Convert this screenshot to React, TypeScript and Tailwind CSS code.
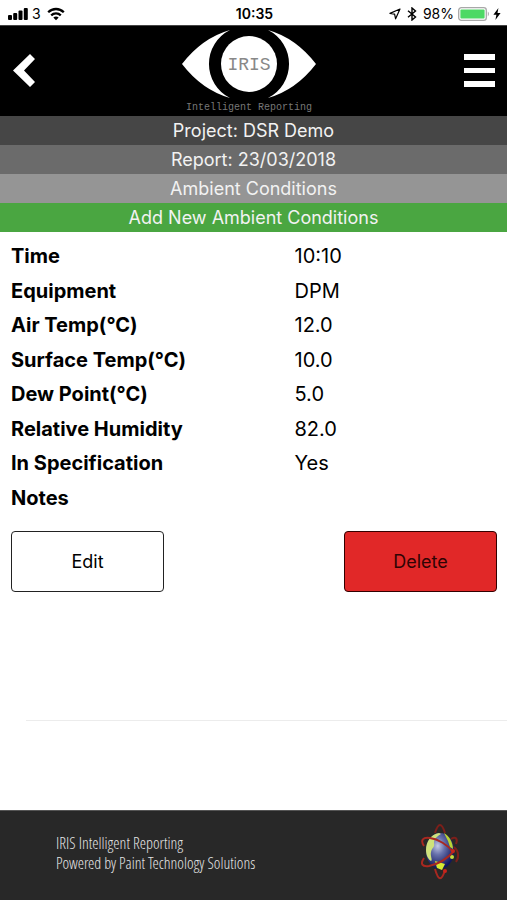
import type { ReactNode } from "react";

type Reading = {
  label: string;
  value: string;
};

const readings: Reading[] = [
  { label: "Time", value: "10:10" },
  { label: "Equipment", value: "DPM" },
  { label: "Air Temp(°C)", value: "12.0" },
  { label: "Surface Temp(°C)", value: "10.0" },
  { label: "Dew Point(°C)", value: "5.0" },
  { label: "Relative Humidity", value: "82.0" },
  { label: "In Specification", value: "Yes" },
  { label: "Notes", value: "" },
];

const StatusBar = () => (
  <div className="grid h-[25px] grid-cols-3 items-center pt-[2px] pl-2 pr-[6px] text-sm leading-5 text-black">
    <div className="flex items-center">
      <svg width="20" height="12" viewBox="0 0 20 12" aria-hidden="true">
        <rect x="0" y="7" width="4" height="5" rx="1" />
        <rect x="5.2" y="5" width="4" height="7" rx="1" />
        <rect x="10.5" y="2.5" width="4" height="9.5" rx="1" />
        <rect x="15.8" y="0" width="4" height="12" rx="1" />
      </svg>
      <span className="ml-1">3</span>
      <svg className="ml-[6px]" width="18" height="14" viewBox="0 0 18 14" fill="none" stroke="currentColor" strokeWidth="2.3" aria-hidden="true">
        <path d="M1.2 5.2C5.6 .9 12.4 .9 16.8 5.2" />
        <path d="M4.2 8.3C6.9 5.7 11.1 5.7 13.8 8.3" />
        <path d="M6.3 10.5C7.9 9.1 10.1 9.1 11.7 10.5L9 13.3Z" fill="currentColor" stroke="none" />
      </svg>
    </div>
    <div className="text-center font-semibold">10:35</div>
    <div className="flex items-center justify-end">
      <svg width="12" height="12" viewBox="0 0 12 12" fill="none" stroke="currentColor" strokeWidth="1.2" strokeLinejoin="round" aria-hidden="true">
        <path d="M11 1L1 5.4L5.6 6.2L6.6 10.8Z" />
      </svg>
      <svg className="ml-[6px]" width="10" height="14" viewBox="0 0 10 14" fill="none" stroke="currentColor" strokeWidth="1.4" aria-hidden="true">
        <path d="M1 3.8L8.5 10L5 13V1L8.5 4L1 10.2" />
      </svg>
      <span className="ml-[6px]">98%</span>
      <svg className="ml-1" width="32" height="14" viewBox="0 0 32 14" aria-hidden="true">
        <rect x=".7" y=".7" width="27.6" height="12.6" rx="2.6" fill="#fff" stroke="#a8a8a8" strokeWidth="1.3" />
        <rect x="2.4" y="2.4" width="24.2" height="9.2" rx="1" fill="#4cd964" />
        <path d="M29.8 4.6C31.3 5.4 31.3 8.6 29.8 9.4Z" fill="#a8a8a8" />
      </svg>
      <svg className="ml-[3px]" width="8" height="12" viewBox="0 0 8 12" aria-hidden="true">
        <path d="M5.4 0L.4 6.8H3.4L2.4 12L7.6 5H4.5Z" />
      </svg>
    </div>
  </div>
);

const IrisLogo = () => (
  <svg width="136" height="84" viewBox="181 28 136 84" role="img" aria-label="IRIS Intelligent Reporting">
    <g fill="#fff">
      <path d="M182 64Q202 38 230 30A38 38 0 0 0 230 98Q202 90 182 64Z" />
      <path d="M316 64Q296 38 268 30A38 38 0 0 1 268 98Q296 90 316 64Z" />
      <circle cx="249" cy="64" r="28" />
    </g>
    <g className="font-['Liberation_Mono',monospace]" textAnchor="middle">
      <text x="249" y="70" fontSize="18" fill="#888">IRIS</text>
      <text x="249" y="110" fontSize="10" fill="#777">Intelligent Reporting</text>
    </g>
  </svg>
);

const Header = () => (
  <header className="flex h-[91px] items-center justify-between border-t border-[#444] bg-black pb-[2px] pl-[13px] pr-3">
    <button type="button" aria-label="Back" className="w-[21px]">
      <svg width="22" height="33" viewBox="0 0 22 33" fill="#fff">
        <path d="M17 0L0 16.5L17 33L22 28L11 16.5L22 5Z" />
      </svg>
    </button>
    <IrisLogo />
    <button type="button" aria-label="Menu" className="flex w-[31px] flex-col gap-2">
      <span className="h-[6px] w-full bg-white" />
      <span className="h-[5px] w-full bg-white" />
      <span className="h-[6px] w-full bg-white" />
    </button>
  </header>
);

const Band = ({ className, children }: { className: string; children: ReactNode }) => (
  <div className={`h-[29px] text-center text-lg leading-[29px] text-[#f2f2f2] ${className}`}>{children}</div>
);

const GlobeLogo = () => (
  <svg width="40" height="60" viewBox="0 0 40 60" role="img" aria-label="Paint Technology Solutions">
    <defs>
      <radialGradient id="globe" cx="42%" cy="36%" r="62%">
        <stop offset="0" stopColor="#c3c8e6" />
        <stop offset=".4" stopColor="#6670aa" />
        <stop offset="1" stopColor="#10165c" />
      </radialGradient>
    </defs>
    <g fill="none" stroke="#7c1f1a" strokeWidth="2">
      <path d="M36 39C40 33 38 26 33 24M31 16C36 13 38 16 36 21" />
      <path d="M15 10Q20 -6 25 10" />
    </g>
    <ellipse cx="20" cy="28" rx="14" ry="18" fill="url(#globe)" />
    <path d="M19 10C11 11 6 19 6 27C6 32 8 36 11 38C13 37 10 33 11 29C12 24 15 25 14 20C14 15 18 13 21 11Z" fill="#cfe27a" />
    <path d="M24 10C29 13 33 19 33 26L30 24L28 18Z" fill="#b9d334" />
    <path d="M15 38L25 41L22 47L17 45Z" fill="#d5ea32" />
    <circle cx="32" cy="34" r="2" fill="#c6dc3c" />
    <g fill="none" stroke="#a82820" strokeWidth="2">
      <path d="M4 23C0 17 3 14 10 15C18 16 28 22 33 29" />
      <path d="M4 35C0 41 2 44 9 43C18 41 28 35 34 28" />
      <path d="M15 46Q20 64 25 47" />
    </g>
    <circle cx="33" cy="28" r="2" fill="#c8241c" />
    <circle cx="25" cy="48" r="2" fill="#c8241c" />
  </svg>
);

const App = () => {
  return (
    <div className="flex min-h-screen flex-col bg-white font-['Inter','Liberation_Sans',sans-serif] text-black">
      <StatusBar />
      <Header />
      <Band className="bg-[#464646]">Project: DSR Demo</Band>
      <Band className="bg-[#6b6b6b]">Report: 23/03/2018</Band>
      <Band className="bg-[#959595]">Ambient Conditions</Band>
      <button type="button" className="h-[29px] bg-[#4aa641] text-lg leading-[29px] text-[#f2f2f2]">
        Add New Ambient Conditions
      </button>

      <main className="flex-1 pt-[7px]">
        <div className="pl-[11px] pr-[10px]">
          <table className="w-full table-fixed text-xl leading-7">
            <tbody>
              {readings.map(({ label, value }) => (
                <tr key={label} className="odd:h-[34px] even:h-[35px]">
                  <th scope="row" className="w-7/12 p-0 text-left font-bold">{label}</th>
                  <td className="p-0">{value}</td>
                </tr>
              ))}
            </tbody>
          </table>

          <div className="mt-4 flex justify-between text-lg">
            <button type="button" className="h-[61px] w-[153px] rounded border border-[#222] bg-white">Edit</button>
            <button type="button" className="h-[61px] w-[153px] rounded border border-[#300] bg-[#e12828] text-[#300404]">Delete</button>
          </div>
        </div>
        <hr className="mt-32 ml-[26px] border-[#ececec]" />
      </main>

      <footer className="flex h-[90px] items-center justify-between border-t border-[#555] bg-[#282828] pb-[6px] pl-14 pr-[47px]">
        <p className="font-['Open_Sans_Condensed_Light','Open_Sans_Condensed','Lato',sans-serif] text-base leading-5 text-[#e4e4e4]">
          IRIS Intelligent Reporting
          <br />
          Powered by Paint Technology Solutions
        </p>
        <GlobeLogo />
      </footer>
    </div>
  );
};

export default App;
